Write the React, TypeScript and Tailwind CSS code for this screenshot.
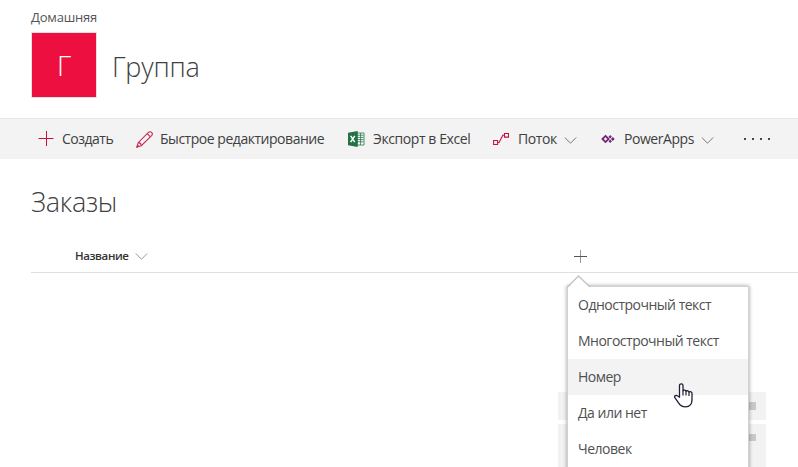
import type { ReactNode } from 'react';

function Chevron({ className = '' }: { className?: string }) {
  return (
    <svg className={`h-[7px] w-[13px] shrink-0 ${className}`} viewBox="0 0 13 7" fill="none" stroke="currentColor">
      <path d="M.8.5 6.5 6.2 12.2.5" />
    </svg>
  );
}

function PlusIcon() {
  return (
    <svg className="size-4" viewBox="0 0 16 16" fill="none" stroke="#c8103e" strokeWidth="1">
      <path d="M.5 7.5H15.5" />
      <path d="M8.5 0V15" />
    </svg>
  );
}

function PencilIcon() {
  return (
    <svg className="h-[17px] w-[17px]" viewBox="0 0 17 17" fill="none" stroke="#c92a50" strokeWidth="1.1">
      <path d="m1 16 1.2-4.3L12.4 1.4a2.1 2.1 0 0 1 3.2 3.2L5.3 14.7 1 16Z" />
      <path d="M2.2 11.7c1.5-.2 2.8 1.4 3.1 3M11.2 2.7l3 3" />
      <path d="m1 16 .5-1.8 1.3 1.2Z" fill="#c92a50" />
    </svg>
  );
}

function ExcelIcon() {
  return (
    <svg className="h-[16px] w-[17px]" viewBox="0 0 17 16">
      <path d="M9 2h7v12H9z" fill="#fff" stroke="#217346" strokeWidth=".8" />
      <path d="M9 4.2h6.5M9 6.4h6.5M9 8.6h6.5M9 10.8h6.5M12.6 2v12" stroke="#217346" strokeWidth=".8" />
      <path d="M0 1.8 9.7 0v16L0 14.3Z" fill="#217346" />
      <path d="m2.7 4.9 4 6.3M6.8 4.8l-4.2 6.4" stroke="#fff" strokeWidth="1.5" />
    </svg>
  );
}

function FlowIcon() {
  return (
    <svg className="h-[14px] w-[17px]" viewBox="0 0 17 14" fill="none" stroke="#c4143c" strokeWidth="1.1">
      <path d="M.6 8.5h4v4h-4zM11.5 1.5h4v3.6h-4zM4.6 10.5h1.5L9.8 3.3h1.7" />
    </svg>
  );
}

function PowerAppsIcon() {
  return (
    <svg className="h-[10px] w-[14px]" viewBox="0 0 14 10" fill="#742774">
      <path d="M4.5 1.9 7.6 5 4.5 8.1 1.4 5Z" fill="none" stroke="#742774" strokeWidth="1.8" />
      <path d="m9.2 1 1.7 1.7-1.7 1.7-1.7-1.7Z" />
      <path d="m9.2 5.6 1.7 1.7L9.2 9 7.5 7.3Z" />
      <path d="M11.8 3.1 13.7 5l-1.9 1.9L9.9 5Z" />
    </svg>
  );
}

function Command({ icon, label, className, labelClass, chevron }: {
  icon: ReactNode; label: string; className: string; labelClass: string; chevron?: boolean;
}) {
  return (
    <button className={`flex h-full shrink-0 items-center whitespace-nowrap text-[14px] text-[#404040] ${className}`}>
      <span className="flex shrink-0 items-center">{icon}</span>
      <span className={`shrink-0 pb-[2px] text-left ${labelClass}`}>{label}</span>
      {chevron && <Chevron className="mt-[3px] text-[#777]" />}
    </button>
  );
}

function HandCursor() {
  return (
    <svg className="absolute left-[107px] top-[97px] h-[25px] w-[19px]" viewBox="0 0 19 25">
      <path
        d="M5.5 14.2V2.6C5.5.3 9 .3 9 2.6V7.8C9.6 6.7 12 7 12 8.4 12.8 7.3 15 7.7 15 9.2 16 8.2 18 8.8 18 10.3V16.8C18 21.3 15.4 23.8 11.5 23.8 8 23.8 6.1 22.4 4.7 20.1L.9 14.6C-.1 12.9 2.1 11.7 3.4 12.8Z"
        fill="#fff" stroke="#1f1f35" strokeWidth="1.3" strokeLinejoin="round"
      />
      <path d="M9 7.8v4.7M12 8.4v4.1M15 9.2v3.8" stroke="#1f1f35" strokeWidth="1.2" />
    </svg>
  );
}

const columnTypes = [
  { label: 'Однострочный текст' },
  { label: 'Многострочный текст' },
  { label: 'Номер', active: true },
  { label: 'Да или нет' },
  { label: 'Человек' },
];

function ColumnMenu() {
  return (
    <div className="absolute left-[567px] top-[286px] w-[182px]">
      <div className="h-[200px] border border-[#d2d2d2] bg-white shadow-[0_0_4px_rgba(0,0,0,0.4)]">
        {columnTypes.map(({ label, active }) => (
          <div key={label} className={`flex h-9 items-center whitespace-nowrap pb-[2px] pl-[10px] text-[14px] tracking-[-0.5px] text-[#505050] ${active ? 'bg-[#f3f3f3]' : ''}`}>
            {label}
          </div>
        ))}
      </div>
      <svg className="absolute -left-px -top-[12px] h-[16px] w-[27px]" viewBox="0 0 27 16">
        <path d="M2 14 12.5 2.5 24 13.5V16H2Z" fill="#fff" />
        <path d="M1 13.5 12.5 2 24 13" fill="none" stroke="#c4c4c4" strokeWidth="1.4" />
      </svg>
      <HandCursor />
    </div>
  );
}

export default function App() {
  return (
    <div className="relative flex h-[467px] w-[798px] flex-col overflow-hidden bg-white font-['Open_Sans','Noto_Sans',sans-serif] text-[#404040]">
      <header className="h-[118px] shrink-0 pl-[31px] pt-[8px]">
        <div className="h-[24px] text-[13px] leading-[19px] tracking-[-0.2px] text-[#555]">Домашняя</div>
        <div className="flex items-center">
          <div className="flex size-[66px] items-center justify-center border border-[#e3e3e3] bg-[#ec0f40] text-[28px] font-light text-white">Г</div>
          <h1 className="ml-[15px] mt-[4px] text-[27px] font-light leading-9 tracking-[-0.2px]">Группа</h1>
        </div>
      </header>

      <nav className="flex h-[41px] shrink-0 items-center border-t border-[#e5e5e5] bg-[#f3f3f3] pl-[38px]">
        <Command icon={<PlusIcon />} label="Создать" className="w-[98px]" labelClass="ml-2 tracking-[-0.5px]" />
        <Command icon={<PencilIcon />} label="Быстрое редактирование" className="w-[212px]" labelClass="ml-[7px] tracking-[-0.47px]" />
        <Command icon={<ExcelIcon />} label="Экспорт в Excel" className="w-[145px]" labelClass="ml-2 tracking-[-0.42px]" />
        <Command icon={<FlowIcon />} label="Поток" className="w-[108px]" labelClass="ml-2 w-[46px] tracking-[-0.4px]" chevron />
        <Command icon={<PowerAppsIcon />} label="PowerApps" className="w-[143px]" labelClass="ml-[9px] w-[77px] tracking-[-0.45px]" chevron />
        <div className="flex gap-[6px]">
          {[0, 1, 2, 3].map((n) => <span key={n} className="size-[2px] bg-[#444]" />)}
        </div>
      </nav>

      <main className="flex grow flex-col">
        <h2 className="ml-[31px] mt-[24px] text-[27px] font-light leading-[38px] tracking-[-0.3px]">Заказы</h2>
        <div className="ml-[31px] mt-[18px] flex h-[34px] shrink-0 items-center border-b border-[#dedede] pl-[44px] text-[11.5px]">
          <span className="w-[60px] whitespace-nowrap pt-px font-[550] tracking-[-0.4px] text-[#333]">Название</span>
          <Chevron className="mt-[2px] text-[#999]" />
          <svg className="ml-[426px] mt-[2px] size-[13px]" viewBox="0 0 13 13" fill="none">
            <path d="M6.5 0v13" stroke="#999" /><path d="M0 6.5h13" stroke="#555" />
          </svg>
        </div>
        <div className="ml-[558px] mt-[119px] flex w-[208px] shrink-0 flex-col gap-[4px]">
          <div className="flex h-[28px] justify-end bg-[#f2f2f2] pr-[10px] pt-[10px]"><span className="h-[8px] w-[12px] bg-[#c9c9c9]" /></div>
          <div className="flex h-[43px] justify-end bg-[#f2f2f2] pr-[10px] pt-[10px]"><span className="h-[7px] w-[12px] bg-[#c9c9c9]" /></div>
        </div>
      </main>
      <ColumnMenu />
    </div>
  );
}
